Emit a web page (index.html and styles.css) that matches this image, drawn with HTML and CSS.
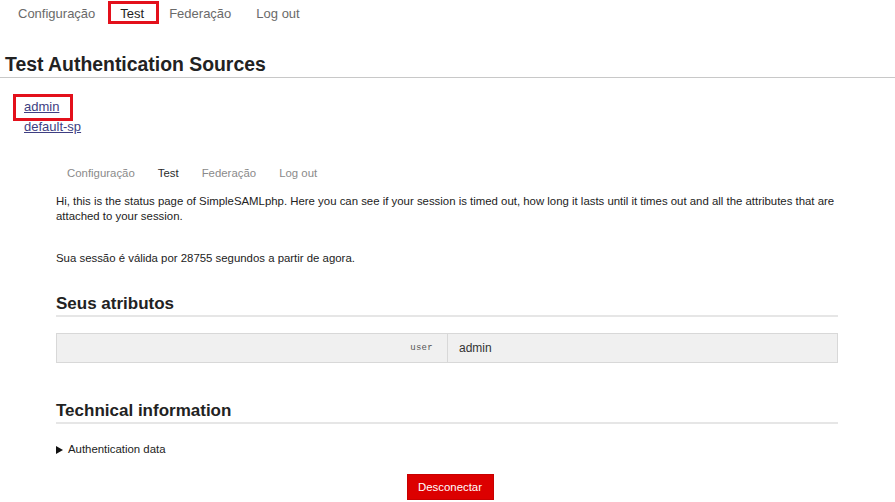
FILE: index.html
```html
<!DOCTYPE html>
<html lang="pt">
<head>
<meta charset="utf-8">
<title>Test Authentication Sources</title>
<link rel="stylesheet" href="styles.css">
</head>
<body>
<nav class="topnav">
  <a class="topnav-item">Configuração</a>
  <a class="topnav-item is-active marked">Test</a>
  <a class="topnav-item">Federação</a>
  <a class="topnav-item">Log out</a>
</nav>
<h1 class="page-title">Test Authentication Sources</h1>
<ul class="sources">
  <li><a class="source-link marked-link" href="#">admin</a></li>
  <li><a class="source-link" href="#">default-sp</a></li>
</ul>
<main class="status">
  <nav class="subnav">
    <span class="subnav-item">Configuração</span>
    <span class="subnav-item is-active">Test</span>
    <span class="subnav-item">Federação</span>
    <span class="subnav-item">Log out</span>
  </nav>
  <p class="intro">Hi, this is the status page of SimpleSAMLphp. Here you can see if your session is timed out, how long it lasts until it times out and all the attributes that are attached to your session.</p>
  <p class="session">Sua sessão é válida por 28755 segundos a partir de agora.</p>
  <h2 class="section-title">Seus atributos</h2>
  <table class="attributes">
    <tr>
      <td class="attrname">user</td>
      <td class="attrvalue">admin</td>
    </tr>
  </table>
  <h2 class="section-title tech">Technical information</h2>
  <div class="details"><span class="triangle"></span>Authentication data</div>
  <div class="actions"><button class="logout-btn">Desconectar</button></div>
</main>
</body>
</html>
```

FILE: styles.css
```css
html, body {
  margin: 0;
  padding: 0;
  background: #fff;
}
body {
  font-family: "Liberation Sans", Arial, sans-serif;
  color: #222;
  overflow: hidden;
}
.topnav {
  display: flex;
  gap: 25px;
  height: 26px;
  padding-top: 1px;
  align-items: center;
  padding-left: 18px;
  font-size: 13px;
  line-height: 26px;
}
.topnav-item {
  color: #6a6a6a;
  text-decoration: none;
}
.topnav-item.is-active {
  color: #1e1e1e;
}
.marked {
  position: relative;
}
.marked::after {
  content: "";
  position: absolute;
  top: 0;
  bottom: 3px;
  left: -12px;
  right: -15px;
  border: 3px solid #e3101b;
}
.page-title {
  margin: 26px 0 0;
  padding: 0 5px 2px;
  font-size: 19.4px;
  line-height: 22px;
  font-weight: bold;
  color: #222;
  border-bottom: 1px solid #c8c8c8;
}
.sources {
  list-style: none;
  margin: 19px 0 0;
  padding: 0 0 0 24px;
  font-size: 13px;
  line-height: 20px;
}
.source-link {
  color: #3e3e82;
  text-decoration: underline;
}
.marked-link {
  position: relative;
}
.marked-link::after {
  content: "";
  position: absolute;
  top: -5px;
  bottom: -7px;
  left: -11px;
  right: -14px;
  border: 3px solid #e3101b;
}
.status {
  margin: 29px 57px 0 56px;
  font-size: 11.4px;
  line-height: 15px;
  color: #222;
}
.subnav {
  display: flex;
  gap: 23px;
  padding-left: 11px;
  height: 15px;
}
.subnav-item {
  color: #8a8a8a;
}
.subnav-item.is-active {
  color: #2a2a2a;
}
.intro {
  margin: 13px 0 0;
}
.session {
  margin: 27px 0 0;
}
.section-title {
  margin: 28px 0 0;
  padding: 0 0 1px;
  font-size: 17px;
  line-height: 20px;
  font-weight: bold;
  color: #222;
  border-bottom: 2px solid #e6e6e6;
}
.section-title.tech {
  margin-top: 38px;
}
.attributes {
  width: 100%;
  margin-top: 16px;
  border-collapse: collapse;
  background: #f0f0f0;
  border: 1px solid #d8d8d8;
}
.attributes td {
  height: 28px;
  padding: 0;
  vertical-align: middle;
}
.attrname {
  width: 376px;
  padding-right: 14px !important;
  text-align: right;
  font-family: "Liberation Mono", monospace;
  font-size: 9px;
  letter-spacing: 0.3px;
  color: #555;
  border-right: 1px solid #d8d8d8;
}
.attrvalue {
  padding-left: 11px !important;
  font-size: 12px;
  color: #333;
}
.details {
  margin-top: 18px;
  display: flex;
  align-items: center;
  color: #222;
}
.triangle {
  width: 0;
  height: 0;
  border-left: 7px solid #111;
  border-top: 4px solid transparent;
  border-bottom: 4px solid transparent;
  margin-right: 5px;
}
.actions {
  display: flex;
  justify-content: center;
  margin-top: 17px;
  padding-left: 6px;
}
.logout-btn {
  font-family: "Liberation Sans", Arial, sans-serif;
  font-size: 11.4px;
  line-height: 15px;
  height: 26px;
  padding: 0 10px;
  width: 87px;
  color: #fff;
  background: #dc0000;
  border: 1px solid #c80000;
  border-radius: 0;
}
```
